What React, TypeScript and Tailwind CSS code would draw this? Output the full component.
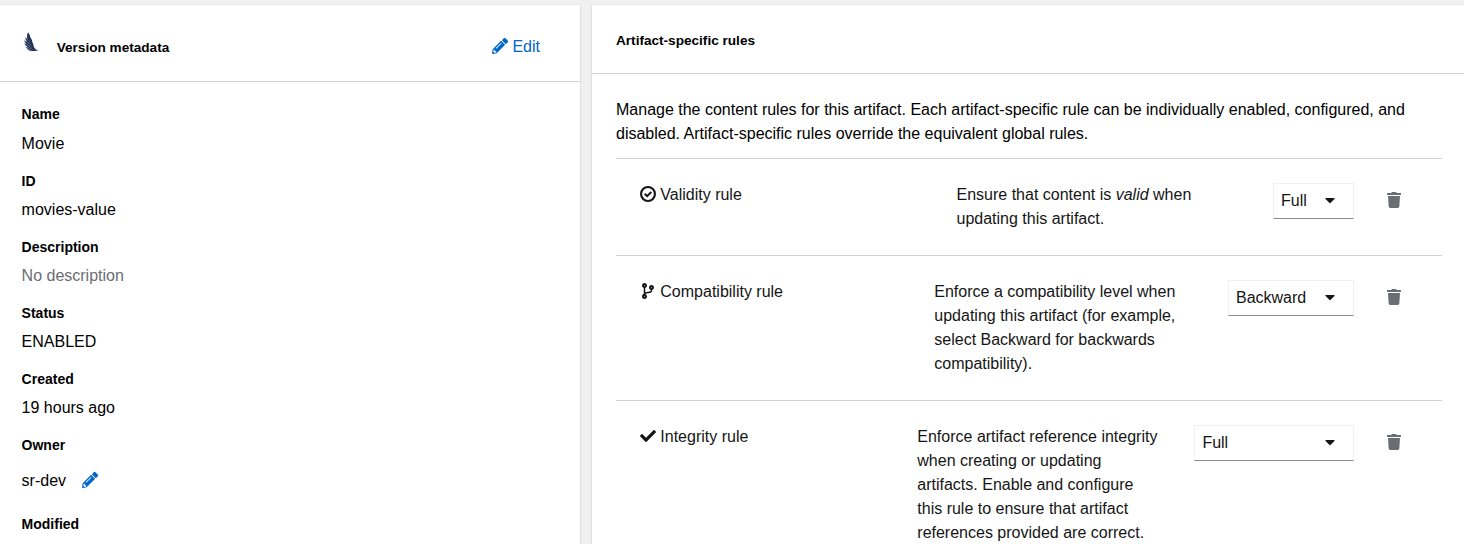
import type { ReactNode } from "react";
import { FaCaretDown, FaCheck, FaCodeBranch, FaPencilAlt, FaTrash } from "react-icons/fa";

function WingLogo() {
  return (
    <svg className="h-[20px] w-[15px] shrink-0" viewBox="0 0 15 20" fill="#243356">
      <path d="M4 .3C5.500 2 6.100 3.800 6.500 5.800 7.800 7.200 8.200 8.600 8.300 10.200c1 1.300 1.300 2.700 1.400 4.300.8 1.800 2 3.300 4.700 4-2.300.5-5.300.5-7.900.2-1.800-.2-3-.7-3.700-1.500 1 .3 2 .4 3 .2-1.900-.5-3.700-1.500-4.500-3 1 .6 2 .9 3 .9C2.400 14.400.8 13 .3 11.100c.9.8 1.900 1.300 3 1.500C1.500 11.400.3 9.900.2 8c.8.9 1.700 1.600 2.800 2C2 8.400 1.100 6.800 1.300 5.100c.5.9 1.100 1.500 1.900 2C2.800 4.700 3 2.500 4 .3Z" />
      <path d="M3 7l2.900 3M2.600 9.900l4.100 3M2.900 12.500l4.700 2.900M3.200 15.200l5.300 2.200" stroke="#fff" strokeOpacity=".45" strokeWidth=".5" fill="none" />
    </svg>
  );
}

function CircleCheck() {
  return (
    <svg className="h-4 w-4" viewBox="0 0 16 16" fill="none" stroke="currentColor" strokeWidth="2.1">
      <circle cx="8" cy="8" r="6.950" />
      <path d="M4.700 7.800l2.400 2.400 4.200-4.200" strokeWidth="2" />
    </svg>
  );
}

function Field({ label, children, muted = false }: { label: string; children: ReactNode; muted?: boolean }) {
  return (
    <div className="mb-[13px] h-[53.150px]">
      <dt className="text-[14px] leading-[21px] font-bold">{label}</dt>
      <dd className={muted ? "mt-[6.200px] leading-6 text-[#6a6e73]" : "mt-[6.200px] leading-6"}>{children}</dd>
    </div>
  );
}

type RuleProps = {
  icon: ReactNode;
  name: string;
  nameClass: string;
  rowClass: string;
  descriptionClass: string;
  selectClass: string;
  value: string;
  children: ReactNode;
};

function Rule({ icon, name, nameClass, rowClass, descriptionClass, selectClass, value, children }: RuleProps) {
  return (
    <li className={`flex items-start border-t border-[#d2d2d2] pt-6 pl-6 text-[#151515] ${rowClass}`}>
      <div className={`flex shrink-0 items-center leading-6 ${nameClass}`}>
        <span className="mr-[4.300px] flex w-4 justify-center pb-[2px]">{icon}</span>
        {name}
      </div>
      <div className={`shrink-0 leading-6 whitespace-nowrap ${descriptionClass}`}>{children}</div>
      <button className={`flex h-9 shrink-0 items-center justify-between border border-[#f0f0f0] border-b-[#8a8d90] pr-[15px] leading-6 ${selectClass}`}>
        {value}
        <FaCaretDown className="mb-[2px]" />
      </button>
      <button className="ml-8 flex h-9 w-4 shrink-0 items-center justify-center pb-[2px] text-[#6a6e73]" aria-label={`Delete ${name}`}>
        <FaTrash />
      </button>
    </li>
  );
}

export default function App() {
  return (
    <div className="flex h-[544px] w-[1464px] gap-3 overflow-hidden bg-[#f0f0f0] pt-[5px] font-['Liberation_Sans',sans-serif] text-[16px] text-black">
      <section className="h-[600px] w-[580px] shrink-0 bg-white shadow-[0_1px_2px_rgba(3,3,3,.12),0_0_2px_rgba(3,3,3,.06)]">
        <header className="flex h-[77px] items-center border-b border-[#d2d2d2] pl-[23.500px]">
          <div className="-mt-[2px]"><WingLogo /></div>
          <h2 className="mt-[9px] ml-[18.200px] text-[13.600px] leading-5 font-bold">Version metadata</h2>
          <button className="mt-[7px] mr-10 ml-auto flex items-center gap-[4.500px] leading-6 text-[#06c]">
            <FaPencilAlt className="mb-[1px]" />
            Edit
          </button>
        </header>
        <dl className="pt-[22.450px] pl-[21.600px]">
          <Field label="Name">Movie</Field>
          <Field label="ID">movies-value</Field>
          <Field label="Description" muted>No description</Field>
          <Field label="Status">ENABLED</Field>
          <Field label="Created">19 hours ago</Field>
          <div className="h-[79px]">
            <dt className="text-[14px] leading-[21px] font-bold">Owner</dt>
            <dd className="mt-[7px] flex h-9 items-center leading-6">
              sr-dev
              <button className="mb-[2.500px] ml-4 text-[#06c]" aria-label="Edit owner"><FaPencilAlt /></button>
            </dd>
          </div>
          <dt className="text-[14px] leading-[21px] font-bold">Modified</dt>
        </dl>
      </section>
      <section className="h-[600px] w-[880px] shrink-0 bg-white shadow-[0_1px_2px_rgba(3,3,3,.12),0_0_2px_rgba(3,3,3,.06)]">
        <header className="flex h-[69px] items-center border-b border-[#d2d2d2] pl-6">
          <h2 className="mt-[3px] text-[13.600px] leading-5 font-bold">Artifact-specific rules</h2>
        </header>
        <div className="w-[850px] pt-6 pl-6">
          <p className="h-[60px] leading-6 whitespace-nowrap">
            Manage the content rules for this artifact. Each artifact-specific rule can be individually enabled, configured, and
            <br />
            disabled. Artifact-specific rules override the equivalent global rules.
          </p>
          <ul>
            <Rule icon={<CircleCheck />} name="Validity rule" nameClass="w-[316.500px]" rowClass="h-[97px]" descriptionClass="w-[316.500px]" selectClass="w-[81px] pl-[7px]" value="Full">
              Ensure that content is <em>valid</em> when
              <br />
              updating this artifact.
            </Rule>
            <Rule icon={<FaCodeBranch />} name="Compatibility rule" nameClass="w-[294.300px]" rowClass="h-[145px]" descriptionClass="w-[293.700px]" selectClass="w-[126px] pl-[7px]" value="Backward">
              Enforce a compatibility level when
              <br />
              updating this artifact (for example,
              <br />
              select Backward for backwards
              <br />
              compatibility).
            </Rule>
            <Rule icon={<FaCheck />} name="Integrity rule" nameClass="w-[277.300px]" rowClass="h-[193px]" descriptionClass="w-[276.700px]" selectClass="w-[160px] pl-[7.400px]" value="Full">
              Enforce artifact reference integrity
              <br />
              when creating or updating
              <br />
              artifacts. Enable and configure
              <br />
              this rule to ensure that artifact
              <br />
              references provided are correct.
            </Rule>
          </ul>
        </div>
      </section>
    </div>
  );
}
